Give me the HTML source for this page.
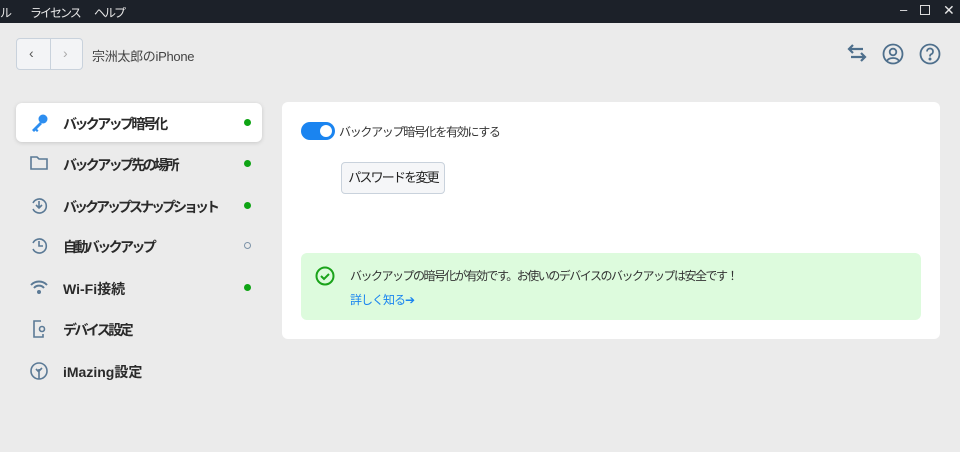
<!DOCTYPE html>
<html><head><meta charset="utf-8"><style>
*{margin:0;padding:0;box-sizing:border-box}
body{width:960px;height:452px;background:#ebebeb;font-family:"Liberation Sans","Noto Sans CJK JP",sans-serif;position:relative;overflow:hidden;color:#333}
.tb{position:absolute;left:0;top:0;width:960px;height:23px;background:#1c2129;color:#e8e8e8;font-size:12px;letter-spacing:-2px}
.tb span{position:absolute;top:4px;white-space:nowrap}
.nav{position:absolute;left:16px;top:38px;width:67px;height:32px;border:1px solid #c9d2dc;border-radius:4px;background:#f3f4f6}
.nav:after{content:"";position:absolute;left:33px;top:0;width:1px;height:30px;background:#c9d2dc}
.ab{position:absolute;font-size:13px;white-space:nowrap}
.item{position:absolute;left:16px;width:246px;height:39px;font-size:14px;font-weight:bold;color:#2a2a2a;letter-spacing:-2.6px}
.item .t{position:absolute;left:47px;top:11px;white-space:nowrap}
.item .d{position:absolute;left:228px;top:16px;width:7px;height:7px;border-radius:50%;background:#0ea414}
.item svg{position:absolute;left:13px;top:10px}
.act{background:#fff;border-radius:6px;box-shadow:0 1px 4px rgba(0,0,0,.15)}
.panel{position:absolute;left:282px;top:102px;width:658px;height:237px;background:#fff;border-radius:6px}
</style></head><body>
<div class="tb"><span style="left:0">ル</span><span style="left:30px">ライセンス</span><span style="left:94px">ヘルプ</span>
<span style="left:900px;top:2px;font-size:13px">–</span>
<span style="left:920px;top:5px;width:10px;height:10px;border:1.5px solid #ddd"></span>
<span style="left:943px;top:2px;font-size:14px">✕</span></div>
<div class="nav"><span style="position:absolute;left:12px;top:6px;font-size:14px;color:#555">‹</span><span style="position:absolute;left:46px;top:6px;font-size:14px;color:#aaa">›</span></div>
<div class="ab" style="left:92px;top:46px;color:#444;letter-spacing:-0.3px">宗洲太郎のiPhone</div>
<svg style="position:absolute;left:846px;top:43px" width="22" height="20" viewBox="0 0 22 20" fill="none" stroke="#4e6f8c" stroke-width="2.2"><path d="M3 6h14M7 2L3 6l4 4M19 14H5M15 10l4 4-4 4"/></svg>
<svg style="position:absolute;left:882px;top:43px" width="22" height="22" viewBox="0 0 22 22" fill="none" stroke="#4e6f8c" stroke-width="1.8"><circle cx="11" cy="11" r="9.5"/><circle cx="11" cy="9" r="3.3"/><path d="M5 18c2-4 10-4 12 0"/></svg>
<svg style="position:absolute;left:919px;top:43px" width="22" height="22" viewBox="0 0 22 22" fill="none" stroke="#4e6f8c" stroke-width="1.8"><circle cx="11" cy="11" r="9.5"/><path d="M8 8.5a3 3 0 1 1 4 2.8c-1 .5-1 1.2-1 2.2"/><circle cx="11" cy="16" r=".6" fill="#4e6f8c"/></svg>

<div class="item act" style="top:103px"><svg width="20" height="20" viewBox="0 0 20 20"><circle cx="14" cy="6" r="4.5" fill="#2d8ef0"/><path d="M11 9L3 17l2 2 1.5-1.5L8 19l1.5-1.5L8 16l5-5" fill="#2d8ef0"/></svg><span class="t">バックアップ暗号化</span><span class="d"></span></div>
<div class="item" style="top:144px"><svg width="20" height="18" viewBox="0 0 20 18" fill="none" stroke="#5b7a96" stroke-width="1.6"><path d="M2 3h6l2 2h8v10H2z"/></svg><span class="t">バックアップ先の場所</span><span class="d"></span></div>
<div class="item" style="top:186px"><svg width="20" height="20" viewBox="0 0 20 20" fill="none" stroke="#5b7a96" stroke-width="1.6"><path d="M4 13a7 7 0 1 0 0-6"/><path d="M10 5v7m-3-3l3 3 3-3"/></svg><span class="t" style="letter-spacing:-3px">バックアップスナップショット</span><span class="d"></span></div>
<div class="item" style="top:226px"><svg width="20" height="20" viewBox="0 0 20 20" fill="none" stroke="#5b7a96" stroke-width="1.6"><path d="M4 13a7 7 0 1 0 0-6"/><path d="M10 5v5h4"/></svg><span class="t">自動バックアップ</span><span class="d" style="background:none;border:1.5px solid #7d93a8"></span></div>
<div class="item" style="top:268px"><svg width="20" height="18" viewBox="0 0 20 18" fill="none" stroke="#5b7a96" stroke-width="2"><path d="M2 7a11 11 0 0 1 16 0M5 10a6.5 6.5 0 0 1 10 0"/><circle cx="10" cy="14" r="1" fill="#5b7a96"/></svg><span class="t" style="letter-spacing:0">Wi-Fi接続</span><span class="d"></span></div>
<div class="item" style="top:309px"><svg width="20" height="20" viewBox="0 0 20 20" fill="none" stroke="#5b7a96" stroke-width="1.6"><path d="M12 2H5v16h9v-3"/><circle cx="13" cy="10" r="2.5"/></svg><span class="t">デバイス設定</span></div>
<div class="item" style="top:351px"><svg width="20" height="20" viewBox="0 0 20 20" fill="none" stroke="#5b7a96" stroke-width="1.6"><circle cx="10" cy="10" r="8"/><path d="M10 18V8M10 11l-3-3M10 10l3-3"/></svg><span class="t" style="letter-spacing:0">iMazing設定</span></div>

<div class="panel">
<div style="position:absolute;left:19px;top:20px;width:34px;height:18px;border-radius:9px;background:#1a84f0"><div style="position:absolute;right:3px;top:3px;width:12px;height:12px;border-radius:50%;background:#fff"></div></div>
<div class="ab" style="left:57px;top:21px;font-size:12px;letter-spacing:-1.3px">バックアップ暗号化を有効にする</div>
<div style="position:absolute;left:59px;top:60px;width:104px;height:32px;border:1px solid #c9d2dc;border-radius:4px;background:#f5f6f8;font-size:13px;text-align:center;line-height:30px;color:#222;white-space:nowrap;letter-spacing:-1.8px">パスワードを変更</div>
<div style="position:absolute;left:19px;top:151px;width:620px;height:67px;background:#ddfbdd;border-radius:6px">
<svg style="position:absolute;left:14px;top:13px" width="20" height="20" viewBox="0 0 20 20" fill="none" stroke="#1aa31a" stroke-width="2"><circle cx="10" cy="10" r="8.5"/><path d="M6 10l3 3 5-5"/></svg>
<div class="ab" style="left:49px;top:14px;font-size:12px;letter-spacing:-1.5px">バックアップの暗号化が有効です。お使いのデバイスのバックアップは安全です！</div>
<div class="ab" style="left:49px;top:38px;font-size:12px;color:#1a84f0;letter-spacing:-1px">詳しく知る➔</div>
</div></div>
</body></html>
